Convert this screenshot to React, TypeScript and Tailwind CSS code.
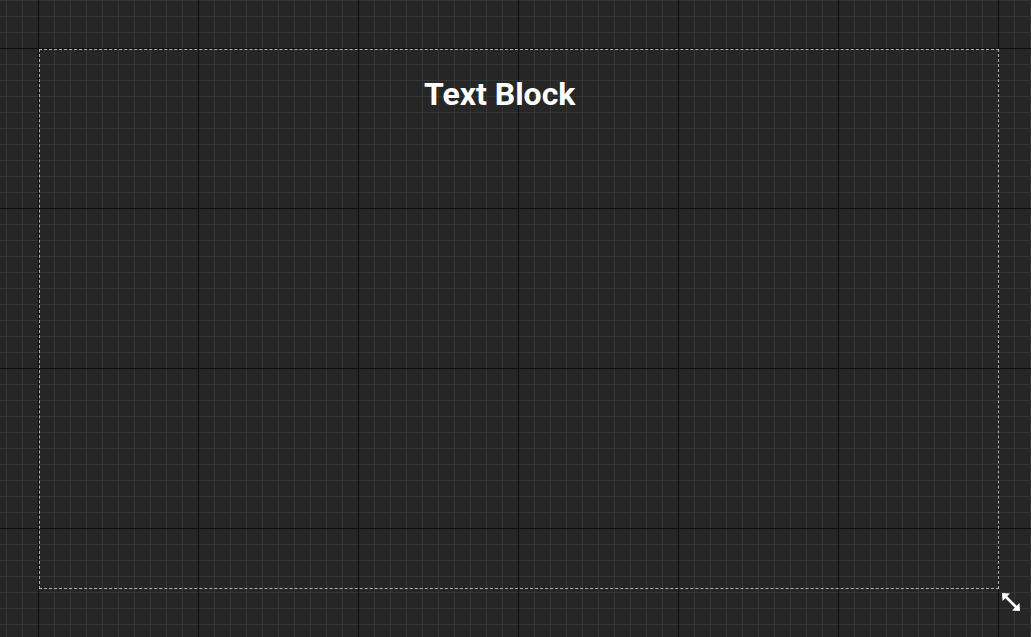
export default function App() {
  return (
    <div
      className="relative h-screen w-full overflow-hidden bg-[#262626] bg-[image:linear-gradient(to_right,#0e0e0e_1px,transparent_1px),linear-gradient(to_bottom,#0e0e0e_1px,transparent_1px),linear-gradient(to_right,#353535_1px,transparent_1px),linear-gradient(to_bottom,#353535_1px,transparent_1px)] bg-[size:160px_160px,160px_160px,16px_16px,16px_16px] bg-[position:38px_48px,38px_48px,6px_0px,6px_0px]"
      style={{ fontFamily: 'Roboto, "Liberation Sans", sans-serif' }}
    >
      <div className="relative ml-[39px] mt-[49px] h-[540px] w-[960px] border border-dashed border-[#b0b0b0]">
        <div className="ml-[384px] mt-[24px] text-[32px] font-bold leading-[40px] text-white">
          Text Block
        </div>
        <svg
          className="absolute -bottom-[24px] -right-[23px] h-[20px] w-[20px]"
          viewBox="0 0 20 20"
          fill="white"
        >
          <path d="M1 1 L9 1.5 L1.5 9 Z" />
          <path d="M19 19 L11 18.5 L18.5 11 Z" />
          <path d="M4 4 L16 16" stroke="white" strokeWidth="2.6" />
        </svg>
      </div>
    </div>
  );
}
